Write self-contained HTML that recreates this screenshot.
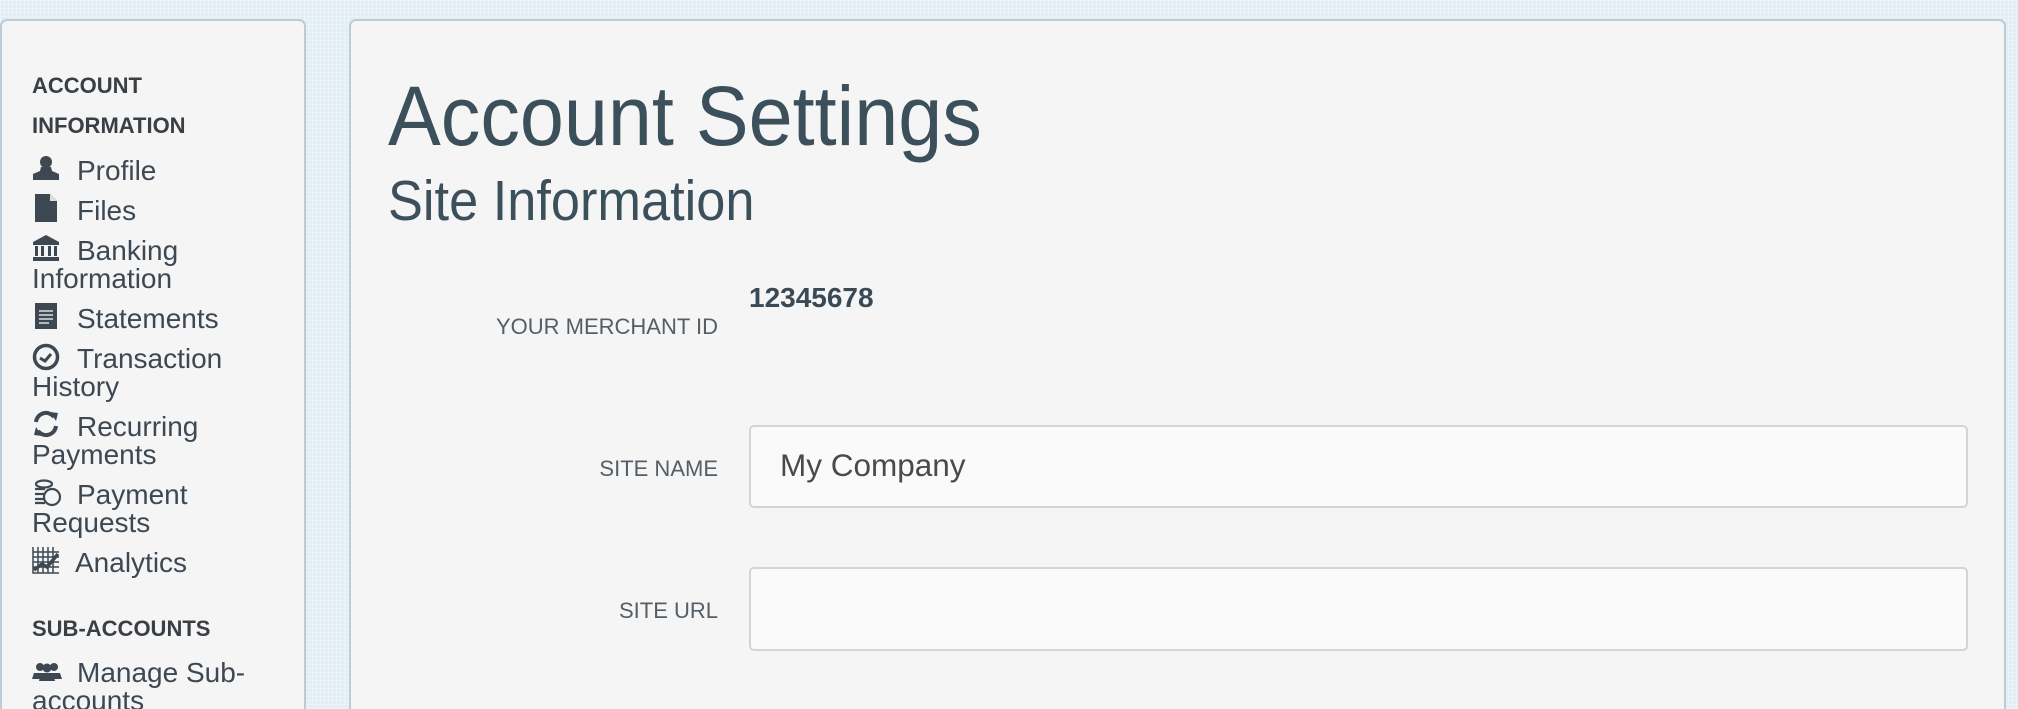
<!DOCTYPE html>
<html style="overflow:hidden"><head><meta charset="utf-8"><style>
html,body{overflow:hidden}
body{margin:0;width:2018px;height:709px;background:#e2edf4;font-family:"Liberation Sans",sans-serif;position:relative;
background-image:linear-gradient(rgba(255,255,255,.25) 1px,transparent 1px),linear-gradient(90deg,rgba(255,255,255,.25) 1px,transparent 1px);background-size:4px 4px}
.panel{position:absolute;background:#f5f5f5;border:2px solid #b9ccd8;border-radius:7px;box-sizing:border-box}
.t{position:absolute;white-space:nowrap;line-height:1}
.sh{font-weight:bold;font-size:22px;color:#3a3f45}
.it{font-size:28px;color:#3d4852;left:32px}
.ic{position:absolute;left:32px}
.lab{font-size:22px;color:#555e66;text-align:right;right:1300px}
.inp{position:absolute;left:749px;width:1219px;background:#fafafa;border:2px solid #d4d4d4;border-radius:5px;box-sizing:border-box}
</style></head><body>
<div class="panel" style="left:0;top:19px;width:306px;height:700px"></div>
<div class="panel" style="left:349px;top:19px;width:1657px;height:700px"></div>

<div class="t sh" style="left:32px;top:75px">ACCOUNT</div>
<div class="t sh" style="left:32px;top:115px">INFORMATION</div>

<svg class="ic" style="top:155px" width="28" height="26" viewBox="0 0 28 26"><circle cx="14" cy="7" r="6" fill="#3d4852"/><path d="M9 12h10l1 4 7 3v6H1v-6l7-3z" fill="#3d4852"/></svg>
<div class="t it" style="left:77px;top:157px">Profile</div>
<svg class="ic" style="top:194px;left:34px" width="24" height="28" viewBox="0 0 24 28"><path d="M1 0h15l7 7v21H1z" fill="#3d4852"/><path d="M16 0v7h7" fill="#ddd"/></svg>
<div class="t it" style="left:77px;top:197px">Files</div>
<svg class="ic" style="top:234px" width="28" height="28" viewBox="0 0 28 28"><path d="M14 1L1 8v3h26V8z" fill="#3d4852"/><rect x="3" y="12" width="3" height="10" fill="#3d4852"/><rect x="9" y="12" width="3" height="10" fill="#3d4852"/><rect x="16" y="12" width="3" height="10" fill="#3d4852"/><rect x="22" y="12" width="3" height="10" fill="#3d4852"/><rect x="1" y="23" width="26" height="4" fill="#3d4852"/></svg>
<div class="t it" style="left:77px;top:237px">Banking</div>
<div class="t it" style="left:32px;top:265px">Information</div>
<svg class="ic" style="top:302px;left:34px" width="24" height="28" viewBox="0 0 24 28"><rect x="1" y="1" width="22" height="26" fill="#3d4852"/><g stroke="#ddd" stroke-width="1.5"><path d="M5 9h14M5 13h14M5 17h14M5 21h10"/></g></svg>
<div class="t it" style="left:77px;top:305px">Statements</div>
<svg class="ic" style="top:343px" width="28" height="28" viewBox="0 0 28 28"><circle cx="14" cy="14" r="11.5" fill="none" stroke="#3d4852" stroke-width="3.5"/><path d="M8 15l5 3 6-7" fill="none" stroke="#3d4852" stroke-width="3"/></svg>
<div class="t it" style="left:77px;top:345px">Transaction</div>
<div class="t it" style="left:32px;top:373px">History</div>
<svg class="ic" style="top:410px" width="28" height="28" viewBox="0 0 28 28"><path d="M4 12A10 10 0 0 1 22 7" fill="none" stroke="#3d4852" stroke-width="4"/><path d="M18 2l8 1-2 8z" fill="#3d4852"/><path d="M24 16A10 10 0 0 1 6 21" fill="none" stroke="#3d4852" stroke-width="4"/><path d="M10 26l-8-1 2-8z" fill="#3d4852"/></svg>
<div class="t it" style="left:77px;top:413px">Recurring</div>
<div class="t it" style="left:32px;top:441px">Payments</div>
<svg class="ic" style="top:479px" width="30" height="28" viewBox="0 0 30 28"><g fill="none" stroke="#3d4852" stroke-width="2.2"><ellipse cx="12" cy="5" rx="8" ry="3.5"/><path d="M3 10h10M3 15h10M3 20h10M3 24h10"/><circle cx="20" cy="18" r="8"/></g></svg>
<div class="t it" style="left:77px;top:481px">Payment</div>
<div class="t it" style="left:32px;top:509px">Requests</div>
<svg class="ic" style="top:546px" width="28" height="28" viewBox="0 0 28 28"><g stroke="#3d4852" stroke-width="1.5" fill="none"><path d="M1 1v26h26"/><path d="M6 1v26M11 1v26M16 1v26M21 1v26M1 6h26M1 11h26M1 16h26M1 21h26"/></g><path d="M2 24l8-6 5 3 11-13" stroke="#3d4852" stroke-width="3.5" fill="none"/></svg>
<div class="t it" style="left:75px;top:549px">Analytics</div>

<div class="t sh" style="left:32px;top:618px">SUB-ACCOUNTS</div>
<svg class="ic" style="top:662px" width="30" height="20" viewBox="0 0 30 20"><g fill="#3d4852"><circle cx="8" cy="5" r="4"/><circle cx="22" cy="5" r="4"/><circle cx="15" cy="6" r="4.5"/><path d="M0 17l2-6h12l2 6z"/><path d="M14 17l2-6h12l2 6z"/><path d="M7 19l2-8h12l2 8z"/></g></svg>
<div class="t it" style="left:77px;top:659px">Manage Sub-</div>
<div class="t it" style="left:32px;top:687px">accounts</div>

<div class="t" style="left:388px;top:74px;font-size:84px;color:#3c505c;transform:scaleX(0.942);transform-origin:left">Account Settings</div>
<div class="t" style="left:388px;top:173px;font-size:57px;color:#3c505c;transform:scaleX(0.918);transform-origin:left">Site Information</div>

<div class="t lab" style="top:316px">YOUR MERCHANT ID</div>
<div class="t" style="left:749px;top:284px;font-size:28px;font-weight:bold;color:#3a4a55">12345678</div>

<div class="t lab" style="top:458px">SITE NAME</div>
<div class="inp" style="top:425px;height:83px"></div>
<div class="t" style="left:780px;top:450px;font-size:31.5px;color:#4a4a4a">My Company</div>

<div class="t lab" style="top:600px">SITE URL</div>
<div class="inp" style="top:567px;height:84px"></div>
</body></html>
